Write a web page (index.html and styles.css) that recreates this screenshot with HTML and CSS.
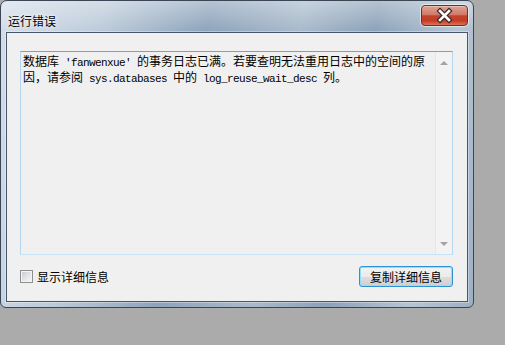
FILE: index.html
```html
<!DOCTYPE html>
<html lang="zh-CN">
<head>
  <meta charset="UTF-8" />
  <title>运行错误</title>
  <link rel="stylesheet" href="styles.css">
</head>
<body>

  <div class="window">
    <div class="titlebar">
      <span class="title">运行错误</span>
      <div class="close-btn">
        <svg width="45" height="19" viewBox="0 0 45 19">
          <path d="M18 5 L27 14 M27 5 L18 14" stroke="#3a2622" stroke-width="5" stroke-linecap="square" fill="none" />
          <path d="M18 5 L27 14 M27 5 L18 14" stroke="#ffffff" stroke-width="2.6" stroke-linecap="square" fill="none" />
        </svg>
      </div>
    </div>

    <div class="client">
      <div class="message-box">
        <div class="message-text">数据库<span class="latin"> 'fanwenxue' </span>的事务日志已满。若要查明无法重用日志中的空间的原因，请参阅<span class="latin"> sys.databases </span>中的<span class="latin"> log_reuse_wait_desc </span>列。</div>
        <div class="scrollbar">
          <span class="arrow-up"></span>
          <span class="arrow-down"></span>
        </div>
      </div>

      <div class="actions">
        <label class="check"><span class="check-box"></span>显示详细信息</label>
        <button class="copy-btn">复制详细信息</button>
      </div>
    </div>
  </div>

</body>
</html>
```

FILE: styles.css
```css
body {
  margin: 0;
  background-color: #ababab;
  font-family: "Noto Sans CJK SC", sans-serif;
  font-size: 12px;
  color: #000;
}

.window {
  width: 474px;
  height: 308px;
  box-sizing: border-box;
  border: 1px solid #3a4656;
  border-radius: 7px 7px 6px 6px;
  padding: 0 5px 5px;
  display: flex;
  flex-direction: column;
  background:
    linear-gradient(180deg, rgba(255,255,255,0.35) 0, rgba(255,255,255,0) 30px),
    linear-gradient(100deg, #d4dee9 0%, #bccbda 20%, #8ea4bb 40%, #a9bacb 58%, #8ca2b9 72%, #b6c5d4 88%, #9cb0c5 100%);
}

.titlebar {
  height: 31px;
  display: flex;
  justify-content: space-between;
  align-items: flex-start;
}

.title {
  margin: 13px 0 0 2px;
  line-height: 13px;
  text-shadow: 0 0 6px rgba(255,255,255,0.9), 0 0 3px rgba(255,255,255,0.8);
}

.close-btn {
  width: 45px;
  height: 19px;
  margin-top: 4px;
  border: 1px solid #6b3026;
  border-radius: 4px;
  box-shadow: 0 0 0 1px rgba(255,255,255,0.55), inset 0 1px 0 rgba(255,255,255,0.35);
  background: linear-gradient(180deg, #e0a396 0%, #d07a67 45%, #c2422b 52%, #c53d25 78%, #d9745c 100%);
}

.close-btn svg {
  display: block;
}

.client {
  flex: 1;
  border: 1px solid #46576b;
  box-shadow: 0 0 0 1px rgba(255,255,255,0.35);
  background-color: #f0f0f0;
  padding: 18px 0 0 13px;
}

.message-box {
  width: 433px;
  height: 204px;
  box-sizing: border-box;
  border: 1px solid;
  border-color: #6fa2d6 #b5d6ef #c8e3f6 #b5d6ef;
  display: flex;
}

.message-text {
  flex: 1;
  padding: 2px;
  line-height: 13px;
}

.latin {
  font-family: "Liberation Mono", monospace;
  font-size: 11px;
  letter-spacing: -0.6px;
}

.scrollbar {
  width: 16px;
  background-color: #f3f3f3;
  border-left: 1px solid #e6e6e6;
  display: flex;
  flex-direction: column;
  justify-content: space-between;
  align-items: center;
  padding: 9px 0 8px;
}

.arrow-up,
.arrow-down {
  width: 0;
  height: 0;
  border-left: 4px solid transparent;
  border-right: 4px solid transparent;
}

.arrow-up {
  border-bottom: 4px solid #a3a3a3;
}

.arrow-down {
  border-top: 4px solid #a3a3a3;
}

.actions {
  width: 433px;
  display: flex;
  justify-content: space-between;
  align-items: center;
  margin-top: 11px;
}

.check {
  display: flex;
  align-items: center;
  gap: 4px;
  line-height: 13px;
}

.check-box {
  width: 11px;
  height: 11px;
  border: 1px solid #8e8f8f;
  box-shadow: inset 0 0 0 1px #f4f4f4;
  background: linear-gradient(135deg, #c4c8cd 0%, #e4e6e8 55%, #f8f8f8 100%);
}

.copy-btn {
  width: 94px;
  height: 21px;
  padding: 0;
  font-family: inherit;
  font-size: 12px;
  color: #000;
  border: 1px solid #2b94d8;
  border-radius: 3px;
  box-shadow: inset 0 0 0 1px #8fe0fb;
  background: linear-gradient(180deg, #f2f2f2 0%, #ebebeb 50%, #dddddd 51%, #cfcfcf 100%);
}
```
